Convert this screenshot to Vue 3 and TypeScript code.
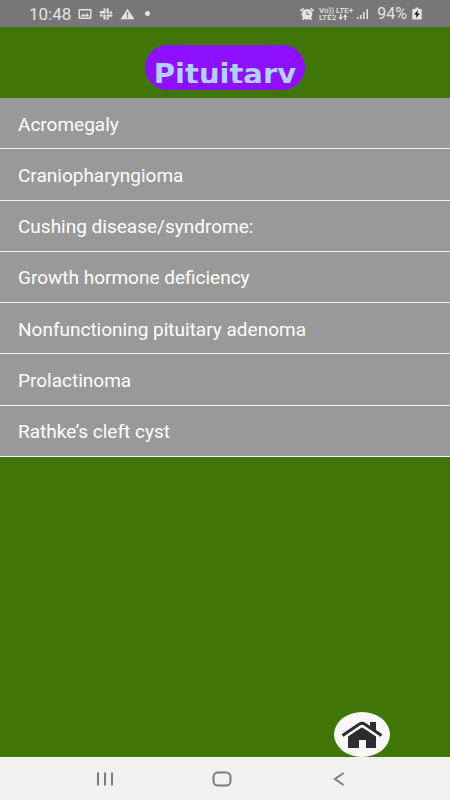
<script setup lang="ts">
interface Condition {
  slug: string
  label: string
}

const conditions: Condition[] = [
  { slug: 'acromegaly', label: 'Acromegaly' },
  { slug: 'craniopharyngioma', label: 'Craniopharyngioma' },
  { slug: 'cushing', label: 'Cushing disease/syndrome:' },
  { slug: 'growth-hormone', label: 'Growth hormone deficiency' },
  { slug: 'adenoma', label: 'Nonfunctioning pituitary adenoma' },
  { slug: 'prolactinoma', label: 'Prolactinoma' },
  { slug: 'rathke', label: 'Rathke’s cleft cyst' },
]
</script>

<template>
  <div class="screen">
    <div class="status">
      <div class="group group-start">
        <span class="time">10:48</span>
        <svg class="icon" width="14" height="12" viewBox="0 0 14 12">
          <path fill="currentColor" fill-rule="evenodd" d="M1.500 1h11a1 1 0 0 1 1 1v8a1 1 0 0 1-1 1h-11a1 1 0 0 1-1-1V2a1 1 0 0 1 1-1zM2 2.500v7h10v-7zM2.500 8.500l2.500-3 2 2 2-2.500 2.500 3.500z" />
        </svg>
        <svg class="icon" width="14" height="12" viewBox="0 0 14 12">
          <g stroke="currentColor" stroke-width="2.400" stroke-linecap="round" fill="none">
            <path d="M5.500 1.500v.2M5.500 4.200H1.700M8.700 1.500v3M11.800 4.500h.3M8.700 7.600h3.600M8.700 10.300v.2M5.500 7.500v3M2 7.500h.3" />
          </g>
        </svg>
        <svg class="icon" width="15" height="12" viewBox="0 0 15 12">
          <path fill="currentColor" fill-rule="evenodd" d="M7.500.8 14.500 11.200H.5zM6.800 4v3.500h1.400V4zM6.800 8.500V10h1.400V8.500z" />
        </svg>
        <span class="dot"></span>
      </div>
      <div class="group">
        <svg class="icon" width="14" height="12" viewBox="0 0 14 12">
          <path stroke="currentColor" stroke-width="1.800" stroke-linecap="round" d="M1 2.500 3 1M13 2.500 11 1M3 11l1-1M11 11l-1-1" />
          <circle cx="7" cy="6.300" r="5.300" fill="currentColor" />
          <path d="M7 3.500v3h2.500" fill="none" stroke="#777" stroke-width="1.200" />
        </svg>
        <span class="network">
          <span>Vo)) LTE+</span>
          <span>LTE2
            <svg width="10" height="6" viewBox="0 0 9 6"><path fill="currentColor" d="M1.500 0h1.500v3h1.500L2.200 6 0 3h1.500zM6 6h1.500V3H9L6.700 0 4.500 3H6z" /></svg>
          </span>
        </span>
        <svg class="icon" width="13" height="12" viewBox="0 0 13 12">
          <path fill="currentColor" d="M1 9h1.500v2H1zM4 7h1.500v4H4zM7 4h1.500v7H7zM10.500 1H12v10h-1.500z" />
        </svg>
        <span class="battery">94%</span>
        <svg class="icon" width="10" height="13" viewBox="0 0 10 13">
          <path fill="currentColor" d="M3.500.5h3V2H9a.7.7 0 0 1 .7.7v9a.8.8 0 0 1-.7.800H1a.8.8 0 0 1-.7-.8v-9A.7.7 0 0 1 1 2h2.500z" />
          <path fill="#111" d="M5.800 3 2.200 7.500h2.300L4 11l3.800-4.500H5.300z" />
        </svg>
      </div>
    </div>

    <header class="header">
      <h1 class="title"><span class="title-text">Pituitary</span></h1>
    </header>

    <main class="content">
      <nav class="list">
        <a v-for="item in conditions" :key="item.slug" class="row" :href="`#${item.slug}`">{{ item.label }}</a>
      </nav>
      <button class="home" type="button" aria-label="Home">
        <svg width="42" height="28" viewBox="0 0 42 28">
          <path fill="#2d2d2f" d="M29 1h6v10l-6-5z" />
          <path fill="#2d2d2f" d="M7 15.500 21 5l14 10.500V27H25v-8h-7v8H7z" />
          <path fill="none" stroke="#f8f8f8" stroke-width="5" d="M2 15.500 21 3.500l19 12" />
          <path fill="none" stroke="#2d2d2f" stroke-width="3" stroke-linejoin="round" d="M1.500 14.500 18.500 3q2.500-1.500 5 0L40.500 14.500" />
        </svg>
      </button>
    </main>

    <div class="system-nav">
      <button type="button" aria-label="Recent apps">
        <svg width="18" height="16" viewBox="0 0 18 16"><path d="M2 1.500v13M9 1.500v13M16 1.500v13" /></svg>
      </button>
      <button type="button" aria-label="Home screen">
        <svg width="20" height="16" viewBox="0 0 20 16"><rect x="1.500" y="1.500" width="17" height="13" rx="4.500" /></svg>
      </button>
      <button type="button" aria-label="Back">
        <svg width="12" height="16" viewBox="0 0 12 16"><path d="M10.500 2 2 8l8.500 6" /></svg>
      </button>
    </div>
  </div>
</template>

<style>
body {
  margin: 0;
}
</style>

<style scoped>
.screen {
  display: flex;
  flex-direction: column;
  min-height: 100vh;
  background: #407607;
  font-family: Roboto, "Liberation Sans", sans-serif;
}

.status {
  display: flex;
  align-items: center;
  justify-content: space-between;
  box-sizing: border-box;
  height: 27px;
  padding: 0 28px 0 29px;
  background: #777;
  color: #e4e4e4;
  font-size: 16px;
}

.group {
  display: flex;
  align-items: center;
  gap: 5px;
}

.group-start {
  gap: 7px;
}

.icon {
  flex: none;
}

.time {
  font-size: 17px;
}

.dot {
  width: 5px;
  height: 5px;
  margin-left: 3px;
  border-radius: 50%;
  background: currentColor;
}

.network {
  display: flex;
  flex-direction: column;
  margin-right: -2px;
  font-size: 8px;
  font-weight: 500;
  line-height: 7px;
  white-space: nowrap;
}

.battery {
  margin-left: 3px;
}

.header {
  display: flex;
  justify-content: center;
  padding: 18px 0 8px;
}

.title {
  box-sizing: border-box;
  height: 45px;
  margin: 0;
  padding: 12px 9px 0;
  border-radius: 23px;
  background: #8d10ff;
  color: #b1cfff;
  font-family: "DejaVu Sans", Roboto, sans-serif;
  font-size: 29px;
  font-weight: 700;
}

.title-text {
  display: block;
  height: 26px;
  overflow: hidden;
  line-height: 34px;
}

.content {
  display: flex;
  flex: 1;
  flex-direction: column;
  justify-content: space-between;
}

.list {
  display: grid;
  grid-auto-rows: 1fr;
  min-height: 359px;
}

.row {
  display: flex;
  align-items: center;
  padding: 2px 18px 0;
  border-bottom: 1px solid #f4f4f4;
  background: #999;
  color: #fff;
  font-size: 19px;
  text-decoration: none;
}

.home {
  display: flex;
  align-items: center;
  justify-content: center;
  align-self: flex-end;
  width: 56px;
  height: 45px;
  margin-right: 60px;
  padding: 0;
  border: 0;
  border-radius: 50%;
  background: #f8f8f8;
}

.system-nav {
  display: grid;
  grid-template-columns: repeat(3, 1fr);
  height: 43px;
  padding: 0 52px 0 46px;
  background: #f1f1f1;
}

.system-nav button {
  display: flex;
  align-items: center;
  justify-content: center;
  padding: 0;
  border: 0;
  background: none;
}

.system-nav svg {
  fill: none;
  stroke: #7c7c7c;
  stroke-width: 2;
}
</style>
